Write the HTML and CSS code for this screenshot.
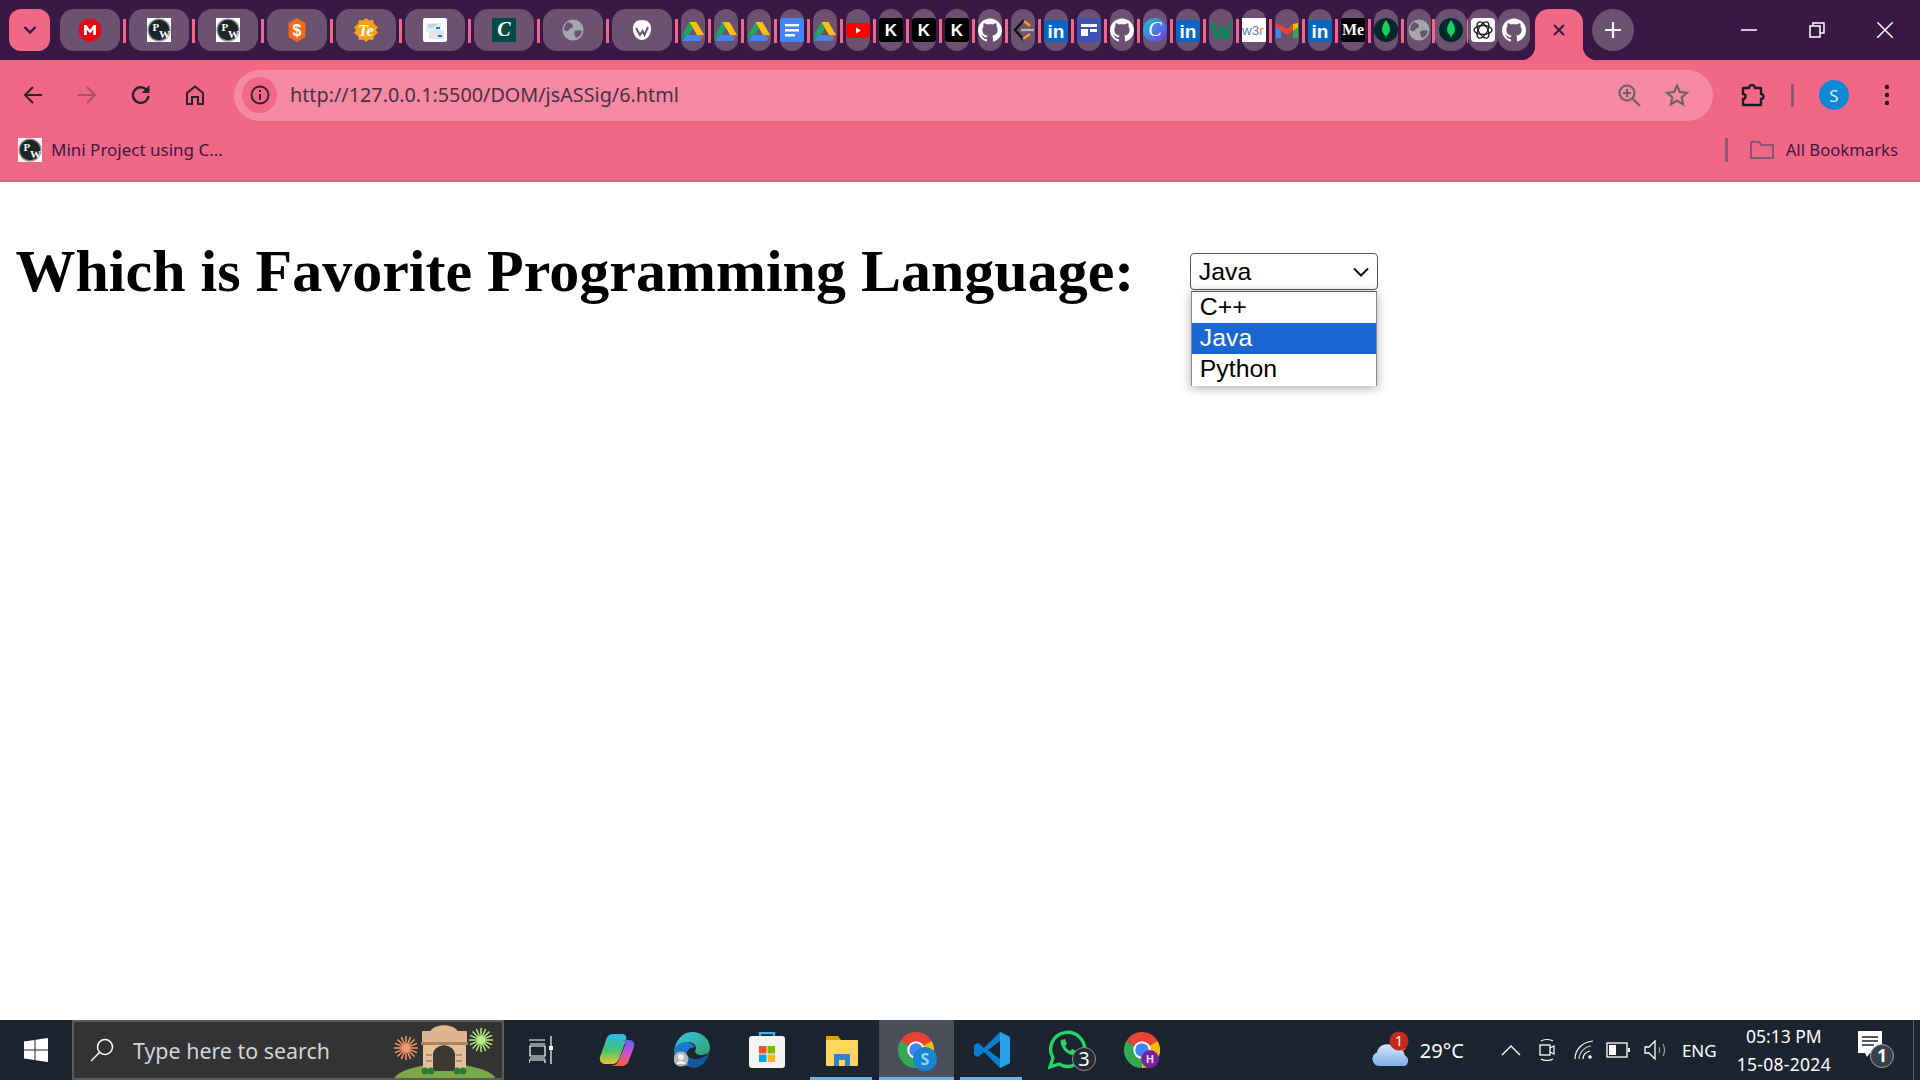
FILE: index.html
```html
<!DOCTYPE html>
<html lang="en">
<head>
    <meta charset="UTF-8">
    <meta name="viewport" content="width=device-width, initial-scale=1.0">
    <title>Favorite Programming Language</title>
    <link rel="stylesheet" href="styles.css">
</head>
<body>

    <svg class="defs" width="0" height="0">
        <symbol id="pw" viewBox="0 0 24 24">
            <rect width="24" height="24" fill="#fff"/>
            <circle cx="12" cy="12" r="11.500" fill="#8b9092"/>
            <circle cx="12" cy="12" r="10.200" fill="#1c2527"/>
        </symbol>
        <symbol id="drive" viewBox="0 0 24 24">
            <path d="M8.500 3h7L8 16H1z" fill="#1fa463" transform="translate(0 1)"/>
            <path d="M15.500 4 23 17h-7L8.500 4z" fill="#ffc107"/>
            <path d="M5 17h18l-3.500 6H1.500z" fill="#4285f4"/>
            <path d="M5 17 1.500 23 1 17z" fill="#0f9d58"/>
            <path d="M19.500 23 23 17h-3z" fill="#ea4335"/>
        </symbol>
        <symbol id="docs" viewBox="0 0 24 24">
            <rect width="24" height="24" rx="2" fill="#4285f4"/>
            <path d="M5 6h14v2.500H5zM5 11h14v2.500H5zM5 16h10v2.500H5z" fill="#fff"/>
        </symbol>
        <symbol id="youtube" viewBox="0 0 24 24">
            <rect y="5" width="24" height="15" rx="4" fill="#f00"/>
            <path d="M10 9.500v6l5-3z" fill="#fff"/>
        </symbol>
        <symbol id="kk" viewBox="0 0 24 24">
            <rect width="24" height="24" rx="3" fill="#000"/>
        </symbol>
        <symbol id="github" viewBox="0 0 24 24">
            <path fill="#fff" d="M12 .5C5.370.5 0 5.780 0 12.292c0 5.211 3.438 9.630 8.205 11.188.6.111.82-.254.82-.567 0-.28-.01-1.022-.015-2.005-3.338.711-4.042-1.582-4.042-1.582-.546-1.361-1.335-1.725-1.335-1.725-1.087-.731.084-.716.084-.716 1.205.082 1.838 1.215 1.838 1.215 1.070 1.803 2.809 1.282 3.495.981.108-.763.417-1.282.76-1.577-2.665-.295-5.466-1.309-5.466-5.827 0-1.287.465-2.339 1.235-3.164-.135-.298-.54-1.497.105-3.121 0 0 1.005-.316 3.300 1.209.96-.262 1.980-.392 3-.398 1.020.006 2.040.136 3 .398 2.280-1.525 3.285-1.209 3.285-1.209.645 1.624.24 2.823.12 3.121.765.825 1.230 1.877 1.230 3.164 0 4.530-2.805 5.527-5.475 5.817.42.354.81 1.077.81 2.182 0 1.578-.015 2.846-.015 3.229 0 .309.21.678.825.56C20.565 21.917 24 17.495 24 12.292 24 5.780 18.627.5 12 .5z"/>
        </symbol>
        <symbol id="linkedin" viewBox="0 0 24 24">
            <rect y="2" width="24" height="22" rx="2" fill="#0a66c2"/>
        </symbol>
        <symbol id="globe" viewBox="0 0 24 24">
            <circle cx="12" cy="12" r="10.500" fill="#a3a8ae"/>
            <path d="M7 4c3 1 5 2 5 4s-3 2-4 4-3 1-5 0c0-3 1-6 4-8zM14 13c3-1 5-1 7 0-1 4-3 6-6 7-1-2-3-6-1-7z" fill="#6b5270"/>
        </symbol>
        <symbol id="mongo" viewBox="0 0 24 24">
            <circle cx="12" cy="12" r="12" fill="#02282c"/>
            <path d="M12 2c2 3 4 6 4 9.500 0 3-2 5-3.300 6L12 21l-.7-3.500C10 16.500 8 14.500 8 11.500 8 8 10 5 12 2z" fill="#13d162"/>
        </symbol>
        <symbol id="chrome" viewBox="0 0 24 24">
            <path d="M12 12 1.600 6a12 12 0 0 1 20.800 0z" fill="#ea4335"/>
            <path d="M12 12 22.400 6A12 12 0 0 1 12 24z" fill="#fbbc04"/>
            <path d="M12 12v12A12 12 0 0 1 1.600 6z" fill="#34a853"/>
            <circle cx="12" cy="12" r="5.800" fill="#fff"/>
            <circle cx="12" cy="12" r="4.500" fill="#4285f4"/>
        </symbol>
    </svg>

    <div class="tabstrip">
        <button class="tab-search">
            <svg width="14" height="10" viewBox="0 0 14 10"><path d="M1.500 2 7 7.500 12.500 2" fill="none" stroke="#3a1845" stroke-width="2.400"/></svg>
        </button>

        <div class="tab"><svg class="fav" viewBox="0 0 24 24"><circle cx="12" cy="12" r="11.500" fill="#e50914"/><path d="M6 17V7h2.500L12 12l3.500-5H18v10h-2.800v-5.500L12 15.500l-3.200-4V17z" fill="#fff"/></svg></div><i class="sep"></i>
        <div class="tab"><svg class="fav" viewBox="0 0 24 24"><use href="#pw"/><text x="5.500" y="12.500" class="pw-letter">P</text><text x="12" y="20" class="pw-letter">W</text></svg></div><i class="sep"></i>
        <div class="tab"><svg class="fav" viewBox="0 0 24 24"><use href="#pw"/><text x="5.500" y="12.500" class="pw-letter">P</text><text x="12" y="20" class="pw-letter">W</text></svg></div><i class="sep"></i>
        <div class="tab"><svg class="fav" viewBox="0 0 24 24"><path d="M12 0 20.500 5v14L12 24l-8.500-5V5z" fill="#f26a1b"/><text x="12" y="18" class="s-letter">$</text></svg></div><i class="sep"></i>
        <div class="tab"><svg class="fav" viewBox="0 0 24 24"><path d="M12 0l3 2.500 4-.5 1 4 4 3-2 3 2 3-4 3-1 4-4-.5-3 2.500-3-2.500-4 .5-1-4-4-3 2-3-2-3 4-3 1-4 4 .5z" fill="#f9a11b"/><text x="12" y="17.500" class="te-letter">Te</text></svg></div><i class="sep"></i>
        <div class="tab"><svg class="fav" viewBox="0 0 24 24"><rect width="24" height="24" rx="2" fill="#fff"/><rect x="3" y="5" width="15" height="9" fill="#e8edf5"/><rect x="6" y="12" width="15" height="9" fill="#dfe6f1"/><rect x="13" y="9" width="4" height="2" fill="#1a73e8"/><rect x="15" y="17" width="4" height="2" fill="#1a73e8"/><path d="M5 7h9M5 9h6" stroke="#a9b4c6"/></svg></div><i class="sep"></i>
        <div class="tab"><svg class="fav" viewBox="0 0 24 24"><rect width="24" height="30" rx="2" y="-3" fill="#024b44"/><text x="12" y="18" class="c-letter">C</text></svg></div><i class="sep"></i>
        <div class="tab"><svg class="fav"><use href="#globe"/></svg></div><i class="sep"></i>
        <div class="tab"><svg class="fav" viewBox="0 0 24 24"><path d="M12 2c6 0 9 3 9 9 0 7-5 11-9 11s-9-4-9-11c0-6 3-9 9-9z" fill="#fff"/><path d="M6 10l4 7 2.500-4 2 4 3.500-8" fill="none" stroke="#6b5270" stroke-width="2"/></svg></div><i class="sep"></i>

        <div class="tab tab-small"><svg class="fav"><use href="#drive"/></svg></div><i class="sep"></i>
        <div class="tab tab-small"><svg class="fav"><use href="#drive"/></svg></div><i class="sep"></i>
        <div class="tab tab-small"><svg class="fav"><use href="#drive"/></svg></div><i class="sep"></i>
        <div class="tab tab-small"><svg class="fav"><use href="#docs"/></svg></div><i class="sep"></i>
        <div class="tab tab-small"><svg class="fav"><use href="#drive"/></svg></div><i class="sep"></i>
        <div class="tab tab-small"><svg class="fav"><use href="#youtube"/></svg></div><i class="sep"></i>
        <div class="tab tab-small"><svg class="fav" viewBox="0 0 24 24"><use href="#kk"/><text x="12" y="18" class="kk-letter">K</text></svg></div><i class="sep"></i>
        <div class="tab tab-small"><svg class="fav" viewBox="0 0 24 24"><use href="#kk"/><text x="12" y="18" class="kk-letter">K</text></svg></div><i class="sep"></i>
        <div class="tab tab-small"><svg class="fav" viewBox="0 0 24 24"><use href="#kk"/><text x="12" y="18" class="kk-letter">K</text></svg></div><i class="sep"></i>
        <div class="tab tab-small"><svg class="fav"><use href="#github"/></svg></div><i class="sep"></i>
        <div class="tab tab-small"><svg class="fav" viewBox="0 0 24 24"><path d="M13 2 4 12l9 10" fill="none" stroke="#111" stroke-width="2.500"/><path d="M10 12h13" stroke="#b3b3b3" stroke-width="2.500"/><path d="M13 3l6 5M12 21l7-5" stroke="#f89f1b" stroke-width="2.500"/></svg></div><i class="sep"></i>
        <div class="tab tab-small"><svg class="fav" viewBox="0 0 24 24"><use href="#linkedin"/><text x="12" y="20" class="li-letter">in</text></svg></div><i class="sep"></i>
        <div class="tab tab-small"><svg class="fav" viewBox="0 0 24 24"><rect width="24" height="30" y="-3" fill="#3f51b5"/><path d="M4 6h16v3H4zM4 11h7v7H4zM13 11h7v3h-7z" fill="#fff"/></svg></div><i class="sep"></i>
        <div class="tab tab-small"><svg class="fav"><use href="#github"/></svg></div><i class="sep"></i>
        <div class="tab tab-small"><svg class="fav" viewBox="0 0 24 24"><defs><linearGradient id="canvaGrad" x1="0" y1="0" x2="1" y2="1"><stop offset="0" stop-color="#16c6cf"/><stop offset="1" stop-color="#7a2ff0"/></linearGradient></defs><circle cx="12" cy="12" r="12" fill="url(#canvaGrad)"/><text x="12" y="18" class="canva-letter">C</text></svg></div><i class="sep"></i>
        <div class="tab tab-small"><svg class="fav" viewBox="0 0 24 24"><use href="#linkedin"/><text x="12" y="20" class="li-letter">in</text></svg></div><i class="sep"></i>
        <div class="tab tab-small"><svg class="fav" viewBox="0 0 24 24"><path d="M1 5h5l3 11 3-9h3l3 9 2-11h3l-4 16h-5l-2-7-2 7H6z" fill="#0c8a5b"/></svg></div><i class="sep"></i>
        <div class="tab tab-small"><svg class="fav" viewBox="0 0 24 24"><rect width="24" height="24" fill="#fff"/><text x="0" y="17" class="w3-letter">w3<tspan fill="#f47c3c">r</tspan></text></svg></div><i class="sep"></i>
        <div class="tab tab-small"><svg class="fav" viewBox="0 0 24 24"><path d="M1 7v13h5V10z" fill="#4285f4"/><path d="M23 7v13h-5V10z" fill="#34a853"/><path d="M1 5v4l11 8 6-4.500V6l-6 5z" fill="#ea4335"/><path d="M18 6v6.500l5-3.500V5z" fill="#fbbc04"/></svg></div><i class="sep"></i>
        <div class="tab tab-small"><svg class="fav" viewBox="0 0 24 24"><use href="#linkedin"/><text x="12" y="20" class="li-letter">in</text></svg></div><i class="sep"></i>
        <div class="tab tab-small"><svg class="fav" viewBox="0 0 24 24"><rect width="24" height="24" rx="2" fill="#000"/><text x="1" y="17" class="me-letter">Me</text></svg></div><i class="sep"></i>
        <div class="tab tab-small"><svg class="fav"><use href="#mongo"/></svg></div><i class="sep"></i>
        <div class="tab tab-small"><svg class="fav"><use href="#globe"/></svg></div><i class="sep sep-tight"></i>
        <div class="tab tab-wide"><svg class="fav"><use href="#mongo"/></svg></div><i class="sep sep-thin"></i>
        <div class="tab tab-wide tab-mid"><svg class="fav" viewBox="0 0 24 24"><rect width="24" height="24" rx="4" fill="#fff"/><g fill="none" stroke="#222" stroke-width="1.400"><ellipse cx="12" cy="12" rx="9" ry="4.500"/><ellipse cx="12" cy="12" rx="9" ry="4.500" transform="rotate(60 12 12)"/><ellipse cx="12" cy="12" rx="9" ry="4.500" transform="rotate(120 12 12)"/></g></svg></div>
        <div class="tab tab-wide"><svg class="fav"><use href="#github"/></svg></div>

        <div class="tab-active">
            <svg width="14" height="14" viewBox="0 0 14 14"><path d="M2 2l10 10M12 2 2 12" stroke="#3a1845" stroke-width="2"/></svg>
        </div>
        <div class="new-tab">
            <svg width="18" height="18" viewBox="0 0 18 18"><path d="M9 1v16M1 9h16" stroke="#fff" stroke-width="2.200"/></svg>
        </div>

        <div class="window-controls">
            <svg width="16" height="16" viewBox="0 0 16 16"><path d="M0 8h16" stroke="#fff" stroke-width="1.500"/></svg>
            <svg width="16" height="16" viewBox="0 0 16 16"><path d="M1 4h10v11H1zM4 4V1h11v10h-4" fill="none" stroke="#fff" stroke-width="1.500"/></svg>
            <svg width="16" height="16" viewBox="0 0 16 16"><path d="M0 0l16 16M16 0 0 16" stroke="#fff" stroke-width="1.500"/></svg>
        </div>
    </div>

    <div class="toolbar">
        <div class="nav-icons">
            <svg width="20" height="20" viewBox="0 0 20 20"><path d="M19 10H2M10 2l-8 8 8 8" fill="none" stroke="#2b2230" stroke-width="2"/></svg>
            <svg width="20" height="20" viewBox="0 0 20 20"><path d="M1 10h17M10 2l8 8-8 8" fill="none" stroke="#a84f68" stroke-width="2"/></svg>
            <svg width="20" height="20" viewBox="0 0 20 20"><path d="M17.500 11a7.800 7.800 0 1 1-2.200-6.500L17 7" fill="none" stroke="#2b2230" stroke-width="2.400"/><path d="M18.500 0v8h-8z" fill="#2b2230"/></svg>
            <svg width="20" height="20" viewBox="0 0 20 20"><path d="M2 19V8l8-6.500L18 8v11h-5v-7H7v7z" fill="none" stroke="#2b2230" stroke-width="2"/></svg>
        </div>
        <div class="omnibox">
            <span class="site-info">
                <svg width="20" height="20" viewBox="0 0 20 20"><circle cx="10" cy="10" r="8.500" fill="none" stroke="#2b2230" stroke-width="1.800"/><path d="M10 9v6M10 5v2" stroke="#2b2230" stroke-width="2"/></svg>
            </span>
            <span class="url">http://127.0.0.1:5500/DOM/jsASSig/6.html</span>
            <svg width="24" height="24" viewBox="0 0 24 24"><circle cx="10" cy="10" r="7.500" fill="none" stroke="#6b5f68" stroke-width="2"/><path d="M15.500 15.500 23 23M6 10h8M10 6v8" stroke="#6b5f68" stroke-width="2"/></svg>
            <svg class="star" width="24" height="24" viewBox="0 0 24 24"><path d="M12 2.500l2.900 6.500 7.100.7-5.400 4.700 1.600 7L12 17.700l-6.200 3.700 1.600-7L2 9.700 9.100 9z" fill="none" stroke="#6b5f68" stroke-width="2"/></svg>
        </div>
        <svg class="puzzle" width="24" height="24" viewBox="0 0 24 24"><path d="M2 5h6a3 3 0 0 1 6 0h6v6a2.500 2.500 0 0 1 0 5v6H2v-6a2.500 2.500 0 0 0 0-5z" fill="none" stroke="#1f1a24" stroke-width="2.400" stroke-linejoin="round"/></svg>
        <i class="toolbar-sep"></i>
        <span class="avatar">S</span>
        <svg class="dots" width="6" height="22" viewBox="0 0 6 22"><circle cx="3" cy="3" r="2.200" fill="#1f1a24"/><circle cx="3" cy="11" r="2.200" fill="#1f1a24"/><circle cx="3" cy="19" r="2.200" fill="#1f1a24"/></svg>
    </div>

    <div class="bookmarks">
        <svg class="fav" viewBox="0 0 24 24"><use href="#pw"/><text x="5.500" y="12.500" class="pw-letter">P</text><text x="12" y="20" class="pw-letter">W</text></svg>
        <span class="bookmark-name">Mini Project using C...</span>
        <i class="bookmark-sep"></i>
        <svg width="24" height="20" viewBox="0 0 24 20"><path d="M1 18V2h8l2.500 3H23v13z" fill="none" stroke="#84587d" stroke-width="2"/></svg>
        <span class="bookmark-all">All Bookmarks</span>
    </div>

    <main class="page">
        <h1>Which is Favorite Programming Language:</h1>
        <div class="select-wrap">
            <div class="select-box">
                <span>Java</span>
                <svg width="16" height="10" viewBox="0 0 16 10"><path d="M1 1.500l7 7 7-7" fill="none" stroke="#111" stroke-width="2"/></svg>
            </div>
            <ul class="select-list">
                <li>C++</li>
                <li class="picked">Java</li>
                <li>Python</li>
            </ul>
        </div>
    </main>

    <div class="taskbar">
        <svg class="start" width="24" height="24" viewBox="0 0 24 24"><path d="M0 3.500 10.500 2v9.500H0zM11.500 1.800 24 0v11.500H11.500zM0 12.500h10.500V22L0 20.500zM11.500 12.500H24V24l-12.500-1.800z" fill="#fff"/></svg>
        <div class="search">
            <svg width="24" height="24" viewBox="0 0 24 24"><circle cx="15" cy="9" r="7.500" fill="none" stroke="#fff" stroke-width="1.500"/><path d="M9.500 14.500 1 23" stroke="#fff" stroke-width="1.500"/></svg>
            <span class="search-text">Type here to search</span>
            <svg class="gate" width="102" height="58" viewBox="0 0 102 58">
                <ellipse cx="52" cy="62" rx="52" ry="18" fill="#7da84a"/>
                <path d="M37 12c3-9 25-9 28 0z" fill="#e3b68e"/>
                <rect x="29" y="11" width="45" height="13" fill="#e0b48c"/>
                <rect x="28" y="22" width="47" height="3" fill="#a9835f"/>
                <path d="M30 25h43v26H62V36c0-14-22-14-22 0v15H30z" fill="#e6c19b"/>
                <path d="M40 51V36c0-14 22-14 22 0v15z" fill="#3b3a30"/>
                <path d="M33 35h6M33 41h6M63 35h6M63 41h6" stroke="#a9835f" stroke-width="1.500"/>
                <circle cx="32" cy="51" r="3.500" fill="#2f7a34"/><circle cx="38" cy="51" r="3.500" fill="#2f7a34"/>
                <circle cx="64" cy="51" r="3.500" fill="#2f7a34"/><circle cx="70" cy="51" r="3.500" fill="#2f7a34"/>
                <path transform="translate(13 28)" stroke="#f59a6b" stroke-width="1.500" d="M-12 0H12M0-12V12M-8.500-8.500 8.500 8.500M-8.500 8.500 8.500-8.500M-11-4.600 11 4.600M-4.600-11 4.600 11M-11 4.600 11-4.600M-4.600 11 4.600-11"/>
                <path transform="translate(88 20)" stroke="#b5ee80" stroke-width="1.500" d="M-12 0H12M0-12V12M-8.500-8.500 8.500 8.500M-8.500 8.500 8.500-8.500M-11-4.600 11 4.600M-4.600-11 4.600 11M-11 4.600 11-4.600M-4.600 11 4.600-11"/>
            </svg>
        </div>
        <svg class="task-view" width="24" height="28" viewBox="0 0 24 28"><path d="M0 4h16M1 8h15M1 10h15v10H1zM1 22h15M0 27V24h16v3M22 0v28" fill="none" stroke="#fff" stroke-width="1.200"/><rect x="20" y="10" width="4" height="4" fill="#fff"/></svg>

        <div class="apps">
            <span class="app">
                <svg width="36" height="36" viewBox="0 0 36 36">
                    <defs>
                        <linearGradient id="copA" x1="0" y1="0" x2="0" y2="1"><stop offset="0" stop-color="#2bb8f0"/><stop offset=".55" stop-color="#45c66e"/><stop offset="1" stop-color="#f2c230"/></linearGradient>
                        <linearGradient id="copB" x1="0" y1="0" x2="0" y2="1"><stop offset="0" stop-color="#5a63f0"/><stop offset=".5" stop-color="#d14fd0"/><stop offset="1" stop-color="#f5633a"/></linearGradient>
                    </defs>
                    <path d="M14 2h9c4 0 5 3 4 6l-7 19c-1 3-4 5-7 5H6c-4 0-6-4-5-7L7 8c1-4 4-6 7-6z" fill="url(#copA)"/>
                    <path d="M21 8h9c4 0 6 3 5 7l-5 13c-1 4-4 6-8 6H11c5 0 8-3 9-6l6-15c1-3 0-5-5-5z" fill="url(#copB)"/>
                </svg>
            </span>
            <span class="app"><svg width="36" height="36" viewBox="0 0 36 36"><defs><linearGradient id="edgeGrad" x1="0" y1="0" x2="1" y2="1"><stop offset="0" stop-color="#36c6e8"/><stop offset="1" stop-color="#2ea36a"/></linearGradient></defs><path d="M18 0c10 0 18 7 18 16 0 5-4 7-9 7-4 0-6-2-6-4 3-4-1-9-7-9-6 0-12 4-14 10C1 9 8 0 18 0z" fill="url(#edgeGrad)"/><path d="M0 20c0-6 6-10 12-10 4 0 7 2 9 5-5 0-9 4-9 10 0 4 3 8 8 9C9 36 0 30 0 20z" fill="#1a79c8"/><path d="M14 24c3 5 14 4 21-3-1 8-8 15-16 15-4 0-7-6-5-12z" fill="#0f5a9e"/><circle cx="7" cy="27" r="7.500" fill="#b5b5b5"/><circle cx="7" cy="25" r="3" fill="#eee"/><path d="M2 32c1-4 9-4 10 0" fill="#eee"/></svg></span>
            <span class="app"><svg width="36" height="36" viewBox="0 0 36 36"><path d="M11 6V1h14v5" fill="none" stroke="#3fb0f0" stroke-width="2.400"/><rect y="4" width="36" height="32" rx="3" fill="#f4f4f4"/><rect x="10" y="14" width="7.500" height="7.500" fill="#f25022"/><rect x="18.500" y="14" width="7.500" height="7.500" fill="#7fba00"/><rect x="10" y="22.500" width="7.500" height="7.500" fill="#00a4ef"/><rect x="18.500" y="22.500" width="7.500" height="7.500" fill="#ffb900"/></svg></span>
            <span class="app app-open"><svg width="36" height="36" viewBox="0 0 36 36"><path d="M2 4h12l3 4h17v4H2z" fill="#e0a210"/><rect x="2" y="8" width="32" height="26" rx="1" fill="#fcd660"/><path d="M10 34V22h16v12h-5v-6h-6v6z" fill="#2f84c9"/></svg></span>
            <span class="app app-open app-now"><svg width="48" height="44" viewBox="0 0 48 44"><svg x="0" y="4" width="36" height="36"><use href="#chrome"/></svg><circle cx="27" cy="31" r="12" fill="#1485d0"/><text x="27" y="37" class="badge-s">S</text></svg></span>
            <span class="app app-open"><svg width="36" height="36" viewBox="0 0 36 36"><path d="M26 0 36 5v26l-10 5L10 20l-6 5-4-2V13l4-2 6 5z" fill="#0a7fd0"/><path d="M26 0 36 5v26l-10 5z" fill="#2aa2ea"/><path d="M26 9 14 18l12 9z" fill="#1c2430"/></svg></span>
            <span class="app app-chat"><svg width="48" height="44" viewBox="0 0 48 44"><path d="M2 38l3-9a17 17 0 1 1 6 6z" fill="none" stroke="#25d366" stroke-width="3.400" transform="translate(0 1)"/><path d="M13 12c-2 5 5 15 12 15 3 0 4-2 4-4l-5-2-2 2c-2-1-4-3-5-5l2-2-2-5z" fill="#25d366"/><circle cx="36" cy="31" r="11.500" fill="#262b33" stroke="#8e9297"/><text x="36" y="38" class="badge-num">3</text></svg></span>
            <span class="app"><svg width="36" height="44" viewBox="0 0 36 44"><svg x="0" y="4" width="36" height="36"><use href="#chrome"/></svg><circle cx="26" cy="31" r="9" fill="#7b1fa2"/><text x="26" y="35" class="badge-h">H</text></svg></span>
        </div>

        <div class="tray">
            <svg class="weather" width="38" height="40" viewBox="0 0 38 40"><defs><linearGradient id="cloudGrad" x1="0" y1="0" x2="0" y2="1"><stop offset="0" stop-color="#d3e6fa"/><stop offset="1" stop-color="#7eaee4"/></linearGradient></defs><path d="M27 12l8 6-6 6z" fill="#e78a2c"/><path d="M8 36a7 7 0 0 1-2-13.500 10 10 0 0 1 18-4 8 8 0 0 1 10 7 6 6 0 0 1 0 10.500z" fill="url(#cloudGrad)"/><circle cx="28" cy="11" r="9.500" fill="#c42b1c"/><text x="28" y="16" class="badge-one">1</text></svg>
            <span class="temp">29°C</span>
            <svg class="tray-chevron" width="20" height="12" viewBox="0 0 20 12"><path d="M1 11l9-9 9 9" fill="none" stroke="#fff" stroke-width="1.400"/></svg>
            <svg class="tray-icon" width="18" height="24" viewBox="0 0 18 24"><rect x="2" y="7" width="10" height="10" fill="none" stroke="#fff" stroke-width="1.300"/><path d="M12 10l4-2v8l-4-2M3 3c3-2 9-2 12 0M3 21c3 2 9 2 12 0" fill="none" stroke="#fff" stroke-width="1.200"/></svg>
            <svg class="tray-icon tray-wifi" width="20" height="20" viewBox="0 0 20 20"><g fill="none" stroke="#fff" stroke-width="1.200"><path d="M1 19C1 10 8 2 19 1"/><path d="M5 19c0-6 5-12 12-13" opacity=".7"/><path d="M9 19c0-4 3-7 7-8"/></g><circle cx="16" cy="17" r="1.800" fill="#fff"/></svg>
            <svg class="tray-icon tray-battery" width="24" height="16" viewBox="0 0 24 16"><rect x="1" y="1" width="20" height="14" fill="none" stroke="#fff" stroke-width="1.300"/><rect x="3" y="3" width="7" height="10" fill="#fff"/><rect x="22" y="6" width="2" height="4" fill="#fff"/></svg>
            <svg class="tray-icon tray-sound" width="24" height="20" viewBox="0 0 24 20"><path d="M1 7v6h4l6 6V1L5 7z" fill="none" stroke="#fff" stroke-width="1.300"/><path d="M15 7c1 2 1 4 0 6M19 4c2 4 2 8 0 12" fill="none" stroke="#9ea3a9" stroke-width="1.200"/></svg>
            <span class="lang">ENG</span>
            <div class="clock">
                <span>05:13 PM</span>
                <span class="clock-date">15-08-2024</span>
            </div>
            <svg class="notify" width="36" height="38" viewBox="0 0 36 38"><path d="M0 0h24v22H12l-3 4-2-4H0z" fill="#fff"/><path d="M4 6h16M4 10h16M4 14h12" stroke="#1c2430" stroke-width="1.400"/><circle cx="24" cy="25" r="11.500" fill="#3b4048" stroke="#9ea3a9"/><text x="24" y="31" class="badge-num-small">1</text></svg>
            <i class="show-desktop"></i>
        </div>
    </div>

</body>
</html>
```

FILE: styles.css
```css
* {
    box-sizing: border-box;
}
html, body {
    height: 100%;
}
body {
    margin: 0;
    width: 1920px;
    height: 1080px;
    overflow: hidden;
    display: flex;
    flex-direction: column;
    background-color: #fff;
    font-family: "Noto Sans", "Open Sans", sans-serif;
}
.defs {
    position: absolute;
}
.pw-letter { font: 700 11px "Liberation Serif", serif; fill: #fff; }
.kk-letter { font: 700 17px "Liberation Sans", sans-serif; fill: #fff; text-anchor: middle; }
.li-letter { font: 700 19px "Liberation Sans", sans-serif; fill: #fff; text-anchor: middle; }
.s-letter { font: 700 16px "Liberation Sans", sans-serif; fill: #fff; text-anchor: middle; }
.te-letter { font: italic 700 16px "Liberation Serif", serif; fill: #fff; text-anchor: middle; }
.c-letter { font: italic 700 20px "Liberation Serif", serif; fill: #fff; text-anchor: middle; }
.canva-letter { font: italic 400 20px "Liberation Serif", serif; fill: #fff; text-anchor: middle; }
.w3-letter { font: 400 13.500px "Liberation Sans", sans-serif; fill: #5a7ca8; }
.me-letter { font: 700 16px "Liberation Serif", serif; fill: #fff; }
.badge-s { font: 700 16px "Noto Sans", sans-serif; fill: #9cd3f5; text-anchor: middle; }
.badge-h { font: 700 11px "Noto Sans", sans-serif; fill: #e9d5f5; text-anchor: middle; }
.badge-num { font: 400 20px "Noto Sans", sans-serif; fill: #fff; text-anchor: middle; }
.badge-one { font: 400 14px "Noto Sans", sans-serif; fill: #fff; text-anchor: middle; }
.badge-num-small { font: 700 17px "Noto Sans", sans-serif; fill: #fff; text-anchor: middle; }

/* tab strip */
.tabstrip {
    height: 60px;
    flex: none;
    display: flex;
    align-items: flex-start;
    padding: 9px 0 0 9px;
    background-color: #3a1845;
}
.tab-search {
    width: 41px;
    height: 42px;
    margin-right: 10px;
    padding: 0;
    border: none;
    border-radius: 12px;
    background-color: #f16786;
    display: flex;
    align-items: center;
    justify-content: center;
}
.tab {
    width: 60px;
    height: 42px;
    flex: none;
    display: flex;
    align-items: center;
    justify-content: center;
    border-radius: 14px;
    background-color: #6b5270;
}
.tab-small {
    width: 24px;
}
.tab-wide {
    width: 32px;
}
.tab-mid {
    width: 30px;
}
.fav {
    width: 24px;
    height: 24px;
    flex: none;
}
.sep {
    width: 3px;
    height: 24px;
    flex: none;
    margin: 10px 3px 0;
    background-color: #f16786;
}
.sep-tight {
    margin: 10px 0 0 1px;
    width: 3px;
}
.sep-thin {
    margin: 10px 0 0;
    width: 1px;
}
.tab-active {
    position: relative;
    width: 48px;
    height: 51px;
    margin-left: 5px;
    display: flex;
    align-items: center;
    justify-content: center;
    padding-bottom: 9px;
    border-radius: 14px 14px 0 0;
    background-color: #f16786;
}
.tab-active::before,
.tab-active::after {
    content: "";
    position: absolute;
    bottom: 0;
    width: 14px;
    height: 14px;
}
.tab-active::before {
    left: -14px;
    background: radial-gradient(circle at 0 0, transparent 14px, #f16786 14.500px);
}
.tab-active::after {
    right: -14px;
    background: radial-gradient(circle at 100% 0, transparent 14px, #f16786 14.500px);
}
.new-tab {
    width: 42px;
    height: 42px;
    margin-left: 9px;
    display: flex;
    align-items: center;
    justify-content: center;
    border-radius: 50%;
    background-color: #6b5270;
}
.window-controls {
    display: flex;
    gap: 52px;
    margin-left: auto;
    padding: 13px 27px 0 0;
}

/* toolbar */
.toolbar {
    height: 70px;
    flex: none;
    display: flex;
    align-items: center;
    background-color: #f16786;
    padding-left: 23px;
}
.nav-icons {
    display: flex;
    gap: 34px;
    margin-right: 29px;
}
.omnibox {
    width: 1479px;
    height: 51px;
    display: flex;
    align-items: center;
    padding: 0 24px 0 8px;
    border-radius: 26px;
    background-color: #f58aa2;
}
.site-info {
    width: 35px;
    height: 36px;
    display: flex;
    align-items: center;
    justify-content: center;
    border-radius: 50%;
    background-color: #f16786;
}
.url {
    flex: 1;
    margin-left: 13px;
    padding-bottom: 2px;
    font-size: 19.800px;
    color: #4a3046;
}
.star {
    margin-left: 24px;
}
.puzzle {
    margin-left: 28px;
}
.toolbar-sep {
    width: 3px;
    height: 23px;
    margin-left: 26px;
    background-color: #8d5a78;
}
.avatar {
    width: 30px;
    height: 30px;
    margin-left: 25px;
    display: flex;
    align-items: center;
    justify-content: center;
    border-radius: 50%;
    background-color: #0f88d4;
    color: #d6eefc;
    font-size: 17px;
}
.dots {
    margin-left: 35px;
}

/* bookmarks */
.bookmarks {
    height: 52px;
    flex: none;
    display: flex;
    align-items: center;
    padding: 0 22px 10px 18px;
    border-bottom: 2px solid #c96a85;
    background-color: #f16786;
    color: #3a1845;
    font-size: 17px;
}
.bookmark-name {
    flex: 1;
    margin-left: 9px;
    padding-bottom: 2px;
}
.bookmark-sep {
    width: 3px;
    height: 24px;
    margin-right: 22px;
    background-color: #8d5a78;
}
.bookmark-all {
    margin-left: 12px;
    padding-bottom: 2px;
    font-size: 16.700px;
}

/* page */
.page {
    flex: 1;
    display: flex;
    align-items: flex-start;
    padding: 55px 0 0 15.500px;
}
h1 {
    margin: 0;
    font: 700 60px "Liberation Serif", serif;
    color: #000;
}
.select-wrap {
    position: relative;
    width: 188px;
    margin: 16px 0 0 55.500px;
}
.select-box {
    height: 37px;
    display: flex;
    align-items: center;
    justify-content: space-between;
    padding: 0 8px 0 8px;
    border: 1px solid #555;
    border-radius: 4px;
    font: 24.800px "Liberation Sans", sans-serif;
    color: #000;
}
.select-list {
    position: absolute;
    top: 38px;
    left: 1px;
    right: 1px;
    margin: 0;
    padding: 0 0 1px;
    list-style: none;
    border-top: 1px solid #555;
    border-left: 1px solid #8a8a8a;
    border-right: 1px solid #8a8a8a;
    background-color: #fff;
    box-shadow: 0 2px 10px rgba(0, 0, 0, 0.35);
    font: 24.800px "Liberation Sans", sans-serif;
    color: #000;
}
.select-list li {
    height: 31px;
    line-height: 29px;
    padding-left: 8px;
}
.select-list .picked {
    background-color: #1967d2;
    color: #fff;
}

/* taskbar */
.taskbar {
    height: 60px;
    flex: none;
    display: flex;
    align-items: center;
    background-color: #1c2430;
    color: #fff;
}
.start {
    margin-left: 24px;
}
.search {
    width: 432px;
    height: 60px;
    margin-left: 24px;
    display: flex;
    align-items: center;
    position: relative;
    padding-left: 16px;
    border: 2px solid #5a5a5a;
    background-color: #333;
}
.search-text {
    margin-left: 19px;
    font-size: 21.400px;
    color: #cfd6dc;
}
.gate {
    position: absolute;
    right: 7px;
    bottom: 0;
}
.task-view {
    margin-left: 25px;
}
.apps {
    display: flex;
    margin-left: 26px;
    height: 60px;
}
.app {
    position: relative;
    width: 75px;
    height: 60px;
    display: flex;
    align-items: center;
    justify-content: center;
}
.app-open::after {
    content: "";
    position: absolute;
    left: 6px;
    right: 7px;
    bottom: 0;
    height: 3px;
    background-color: #6cb0e8;
}
.app-now {
    background-color: #4a4f5a;
    padding-left: 11px;
}
.app-now::after {
    left: 0;
    right: 0;
}
.app-chat {
    padding-left: 10px;
}
.tray {
    display: flex;
    align-items: center;
    margin-left: auto;
    height: 60px;
    padding-right: 6px;
}
.temp {
    margin-left: 11px;
    font-size: 20px;
}
.tray-chevron {
    margin-left: 37px;
}
.tray-icon {
    margin-left: 17px;
}
.tray-wifi {
    margin-left: 18px;
}
.tray-battery {
    margin-left: 12px;
}
.tray-sound {
    margin-left: 14px;
}
.lang {
    margin-left: 14px;
    font-size: 17px;
}
.clock {
    display: flex;
    flex-direction: column;
    align-items: center;
    gap: 5px;
    margin-left: 20px;
    font-size: 17.500px;
    line-height: 23px;
}
.clock-date {
    letter-spacing: 0.3px;
}
.notify {
    margin-left: 27px;
}
.show-desktop {
    width: 1px;
    height: 60px;
    margin-left: 19px;
    background-color: #5a6068;
}
```
